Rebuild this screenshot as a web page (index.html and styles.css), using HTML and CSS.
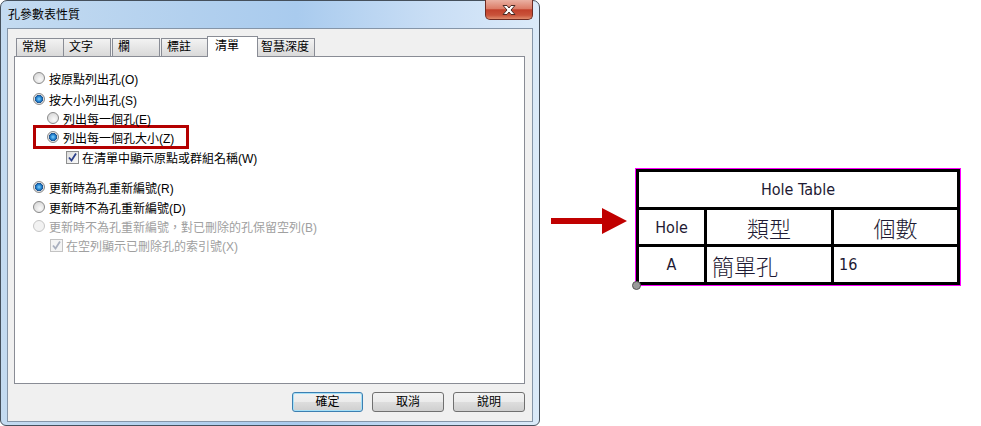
FILE: index.html
```html
<!DOCTYPE html>
<html lang="zh-Hant">
<head>
  <meta charset="UTF-8" />
  <title>孔參數表性質</title>
  <link rel="stylesheet" href="styles.css">
</head>
<body>
  <div class="stage">
    <div class="dialog">
      <div class="titlebar">
        <span class="title">孔參數表性質</span>
        <button class="close-x" aria-label="close">
          <svg width="16" height="12" viewBox="0 0 16 12">
            <path d="M2 1.5h4l2 2.5 2-2.5h4l-4 4.5 4 4.5h-4l-2-2.5-2 2.5h-4l4-4.5z" fill="#fff" stroke="#4a2a24" stroke-width="1" stroke-linejoin="round"/>
          </svg>
        </button>
      </div>

      <div class="client">
        <div class="tabs">
          <div class="tab t-general">常規</div>
          <div class="tab t-text">文字</div>
          <div class="tab t-col">欄</div>
          <div class="tab t-note">標註</div>
          <div class="tab t-list active">清單</div>
          <div class="tab t-depth">智慧深度</div>
        </div>

        <div class="panel">
          <div class="row r1"><span class="radio"></span>按原點列出孔(O)</div>
          <div class="row r2"><span class="radio on"></span>按大小列出孔(S)</div>
          <div class="row r3"><span class="radio"></span>列出每一個孔(E)</div>
          <div class="row highlight"><span class="radio on"></span>列出每一個孔大小(Z)</div>
          <div class="row r5"><span class="check"><svg width="11" height="11" viewBox="0 0 11 11"><path d="M2 5.5l2.5 3 4.5-7" fill="none" stroke="#2b3f8a" stroke-width="1.8"/></svg></span>在清單中顯示原點或群組名稱(W)</div>
          <div class="row r6"><span class="radio on"></span>更新時為孔重新編號(R)</div>
          <div class="row r7"><span class="radio"></span>更新時不為孔重新編號(D)</div>
          <div class="row r8 disabled"><span class="radio"></span>更新時不為孔重新編號，對已刪除的孔保留空列(B)</div>
          <div class="row r9 disabled"><span class="check"><svg width="11" height="11" viewBox="0 0 11 11"><path d="M2 5.5l2.5 3 4.5-7" fill="none" stroke="#a9b0bf" stroke-width="1.8"/></svg></span>在空列顯示已刪除孔的索引號(X)</div>
        </div>

        <div class="actions">
          <button class="btn default">確定</button>
          <button class="btn">取消</button>
          <button class="btn">說明</button>
        </div>
      </div>
    </div>

    <svg class="arrow" width="76" height="28" viewBox="0 0 76 28">
      <path d="M0 11h51V1l25 13-25 13V17H0z" fill="#c00000"/>
    </svg>

    <div class="hole-frame">
      <div class="hole-table">
        <div class="cell head">Hole Table</div>
        <div class="cell">Hole</div>
        <div class="cell cjk">類型</div>
        <div class="cell cjk">個數</div>
        <div class="cell">A</div>
        <div class="cell cjk left">簡單孔</div>
        <div class="cell left">16</div>
      </div>
      <span class="grip"></span>
    </div>
  </div>
</body>
</html>
```

FILE: styles.css
```css
body {
  margin: 0;
  background: #fff;
  font-family: "Liberation Sans", "Noto Sans CJK TC", sans-serif;
  font-size: 12px;
  color: #000;
}

.stage {
  display: flex;
  align-items: flex-start;
}

/* dialog window */
.dialog {
  width: 540px;
  height: 426px;
  box-sizing: border-box;
  border: 1px solid #45505c;
  border-radius: 7px 7px 6px 6px;
  background: linear-gradient(to right, #c4dbf1 0%, #b2d0ee 35%, #a9cbee 55%, #c9def5 80%, #dbeaf9 100%);
  display: flex;
  flex-direction: column;
}

.titlebar {
  height: 27px;
  display: flex;
  align-items: flex-start;
  padding-left: 7px;
}

.title {
  padding-top: 6px;
  line-height: 16px;
  font-size: 12px;
}

.close-x {
  margin-left: auto;
  margin-right: 6px;
  margin-top: -1px;
  width: 48px;
  height: 20px;
  border: 1px solid #6e2b22;
  border-top: none;
  border-radius: 0 0 5px 5px;
  background: linear-gradient(#eab1a3 0%, #dc7d68 45%, #c2412c 52%, #c9533a 80%, #e08b6c 100%);
  display: flex;
  align-items: center;
  justify-content: center;
  padding: 0;
}

.client {
  flex: 1;
  margin: 0 6px 3px 6px;
  border: 1px solid #8595a8;
  background: #f0f0f0;
  padding: 7px 7px 0 6px;
  display: flex;
  flex-direction: column;
}

/* tabs */
.tabs {
  height: 21px;
  display: flex;
  align-items: flex-end;
  padding-left: 2px;
}

.tab {
  box-sizing: border-box;
  height: 18px;
  margin-bottom: 1px;
  border: 1px solid #898c95;
  border-bottom: none;
  background: linear-gradient(#f3f3f3, #e6e6e6 50%, #d9d9d9);
  line-height: 17px;
  padding-left: 5px;
  font-size: 12px;
}

.t-general { width: 48px; }
.t-text { width: 48px; margin-left: -1px; }
.t-col { width: 48px; margin-left: 1px; }
.t-note { width: 47px; margin-left: 1px; }
.t-list { width: 51px; margin-left: -1px; }
.t-depth { width: 58px; margin-left: -1px; padding-left: 3px; }

.tab.active {
  height: 21px;
  margin-bottom: 0;
  background: #fff;
  position: relative;
  z-index: 1;
  padding-left: 7px;
  line-height: 18px;
}

.panel {
  margin-top: -1px;
  height: 328px;
  box-sizing: border-box;
  border: 1px solid #898c95;
  background: #fff;
  padding: 12px 0 0 18px;
}

.row {
  height: 18px;
  display: flex;
  align-items: center;
  white-space: nowrap;
}

.r2 { margin-top: 3px; }
.r3 { margin-top: 1px; margin-left: 14px; }
.r5 { margin-top: -1px; margin-left: 33px; }
.r6 { margin-top: 12px; }
.r7 { margin-top: 2px; }
.r8 { margin-top: 1px; }
.r9 { margin-top: 1px; margin-left: 17px; }

.highlight {
  margin-top: -2px;
  width: 156px;
  box-sizing: border-box;
  height: 24px;
  border: 3px solid #b40000;
  padding-left: 11px;
}

.disabled { color: #a0a0a0; }

.radio {
  width: 12px;
  height: 12px;
  box-sizing: border-box;
  border-radius: 50%;
  border: 1px solid #8a8a8a;
  background: radial-gradient(circle at 60% 65%, #fafafa 0%, #dcdcdc 70%, #c8c8c8 100%);
  margin-right: 4px;
  flex: none;
}

.radio.on {
  background: radial-gradient(circle, #7fd0ff 0%, #1b7ac8 40%, #1d4d86 55%, #e8e8e8 62%, #d0d0d0 100%);
}

.disabled .radio {
  border-color: #c6c6c6;
  background: #f2f2f2;
}

.check {
  width: 13px;
  height: 13px;
  box-sizing: border-box;
  border: 1px solid #8e8f8f;
  background: linear-gradient(135deg, #dcdcdc, #fbfbfb);
  margin-right: 3px;
  flex: none;
  display: flex;
  align-items: center;
  justify-content: center;
}

.disabled .check {
  border-color: #c3c3c3;
  background: #f4f4f4;
}

/* buttons */
.actions {
  margin-top: 8px;
  display: flex;
  justify-content: flex-end;
  gap: 9px;
}

.btn {
  width: 72px;
  height: 20px;
  padding: 0;
  border: 1px solid #707070;
  border-radius: 3px;
  background: linear-gradient(#f2f2f2 0%, #ebebeb 50%, #dddddd 51%, #cfcfcf 100%);
  font-family: "Liberation Sans", "Noto Sans CJK TC", sans-serif;
  font-size: 12px;
  line-height: 17px;
  color: #000;
}

.btn.default {
  width: 71px;
  border-color: #3c7fb1;
  box-shadow: inset 0 0 0 1px #a6e0f7;
}

/* arrow + hole table */
.arrow {
  margin-left: 11px;
  margin-top: 207px;
}

.hole-frame {
  margin-left: 8px;
  margin-top: 168px;
  border: 1px solid #ff00ff;
  position: relative;
}

.hole-table {
  width: 324px;
  box-sizing: border-box;
  display: grid;
  grid-template-columns: 65px 124px 123px;
  grid-template-rows: 35px 34px 35px;
  gap: 3px;
  border: 3px solid #000;
  background: #000;
  font-family: "Liberation Sans Narrow", "DejaVu Sans Condensed", "Noto Sans CJK TC", sans-serif;
  color: #1e1a33;
}

.cell {
  background: #fff;
  display: flex;
  align-items: center;
  justify-content: center;
  font-size: 16px;
}

.cell.cjk {
  font-family: "Noto Sans CJK TC", sans-serif;
  font-weight: 300;
  font-size: 22px;
}

.cell.left {
  justify-content: flex-start;
  padding-left: 5px;
}

.cell.head {
  grid-column: 1 / 4;
}

.grip {
  position: absolute;
  left: -4px;
  bottom: -5px;
  width: 7px;
  height: 7px;
  border-radius: 50%;
  background: #9a9a9a;
  border: 1px solid #555;
}
```
